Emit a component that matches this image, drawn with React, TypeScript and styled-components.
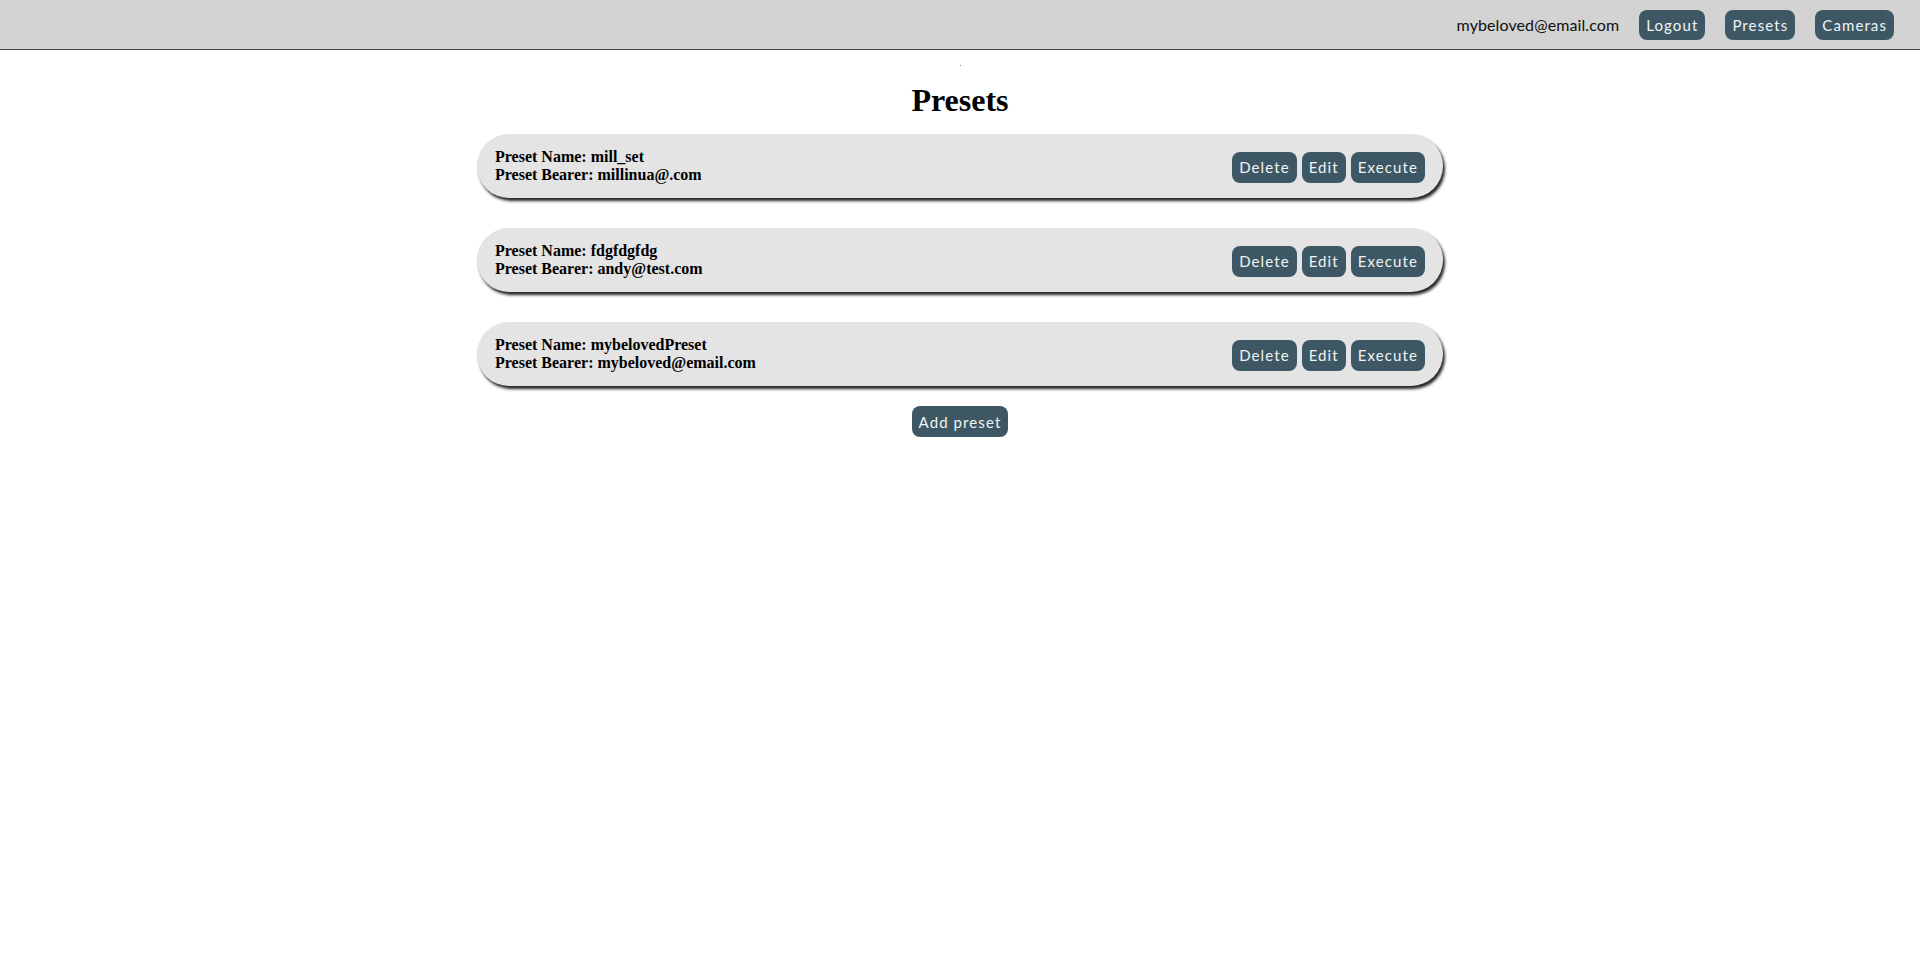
import React from "react";
import styled, { createGlobalStyle } from "styled-components";

const GlobalStyle = createGlobalStyle`
  html, body { margin: 0; padding: 0; background: #ffffff; }
  body { font-family: "Liberation Serif", serif; }
`;

const Header = styled.header`
  display: flex;
  justify-content: flex-end;
  align-items: center;
  gap: 20px;
  height: 49px;
  padding-right: 26px;
  background: #d3d3d3;
  border-bottom: 1px solid #4a4a4a;
`;

const UserEmail = styled.span`
  font-family: "Lato", sans-serif;
  font-size: 16px;
  letter-spacing: 0.1px;
  color: #111;
`;

const Button = styled.button<{ $small?: boolean }>`
  height: ${(p) => (p.$small ? 31 : 30)}px;
  padding: 0 7px;
  border: none;
  border-radius: 8px;
  background: #3e5765;
  color: #f0f4f4;
  font-family: "Lato", sans-serif;
  font-size: 15px;
  letter-spacing: 1.1px;
  cursor: pointer;
`;

const Main = styled.main`
  display: flex;
  flex-direction: column;
  align-items: center;
`;

const Dot = styled.div`
  width: 1px;
  height: 1px;
  margin-top: 15px;
  background: #888;
`;

const Title = styled.h1`
  margin: 16px 0 0;
  font-family: "Liberation Serif", serif;
  font-size: 32px;
  font-weight: bold;
  color: #000;
`;

const List = styled.div`
  display: flex;
  flex-direction: column;
  gap: 30px;
  width: 966px;
  margin-top: 15px;
`;

const Card = styled.div`
  display: flex;
  align-items: center;
  justify-content: space-between;
  height: 64px;
  padding: 0 18px 0 18px;
  box-sizing: border-box;
  background: #e4e4e4;
  border-radius: 32px;
  box-shadow: 2px 3px 3px #262626;
`;

const Info = styled.div`
  display: flex;
  flex-direction: column;
  font-family: "Liberation Serif", serif;
  font-size: 16px;
  font-weight: bold;
  line-height: 18px;
  color: #000;
  padding-bottom: 1px;
`;

const Actions = styled.div`
  display: flex;
  gap: 5px;
  padding-top: 2px;
`;

const AddRow = styled.div`
  margin-top: 20px;
`;

const presets = [
  { name: "mill_set", bearer: "millinua@.com" },
  { name: "fdgfdgfdg", bearer: "andy@test.com" },
  { name: "mybelovedPreset", bearer: "mybeloved@email.com" },
];

export default function App() {
  return (
    <>
      <GlobalStyle />
      <Header>
        <UserEmail>mybeloved@email.com</UserEmail>
        <Button>Logout</Button>
        <Button>Presets</Button>
        <Button>Cameras</Button>
      </Header>
      <Main>
        <Dot />
        <Title>Presets</Title>
        <List>
          {presets.map((p) => (
            <Card key={p.name}>
              <Info>
                <span>Preset Name: {p.name}</span>
                <span>Preset Bearer: {p.bearer}</span>
              </Info>
              <Actions>
                <Button $small>Delete</Button>
                <Button $small>Edit</Button>
                <Button $small>Execute</Button>
              </Actions>
            </Card>
          ))}
        </List>
        <AddRow>
          <Button $small>Add preset</Button>
        </AddRow>
      </Main>
    </>
  );
}
